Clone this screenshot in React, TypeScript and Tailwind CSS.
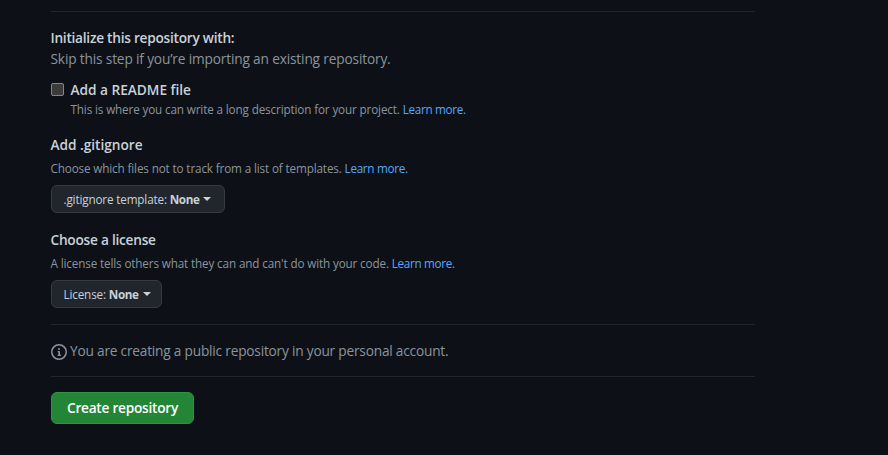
import type { ReactNode } from 'react'

function Divider() {
  return <div className="h-px w-[704px] bg-[#21262d]" />
}

function Heading({ children, className = '' }: { children: ReactNode; className?: string }) {
  return <h2 className={`-ml-[0.5px] h-[21px] text-[13.7px] leading-[19px] font-semibold text-[#c9d1d9] ${className}`}>{children}</h2>
}

function Note({ children, link, className = '' }: { children: ReactNode; link: string; className?: string }) {
  return (
    <p className={`-ml-[0.5px] h-[18px] text-[11.7px] leading-4 tracking-[-0.135px] text-[#8b949e] ${className}`}>
      {children} <a className="tracking-[-0.3px] text-[#58a6ff]">{link}</a>
    </p>
  )
}

function Dropdown({ label, value, className = '' }: { label: string; value: string; className?: string }) {
  return (
    <button className={`flex h-7 items-center rounded-md border border-[#363b42] bg-[#21262d] pl-[11.5px] text-[11.7px] leading-4 font-medium text-[#c9d1d9] ${className}`}>
      <span className="tracking-[-0.15px]">{label} <span className="font-bold tracking-[-0.4px]">{value}</span></span>
      <span className="ml-1 border-x-4 border-t-4 border-x-transparent border-t-[#c9d1d9]" />
    </button>
  )
}

export default function App() {
  return (
    <main className="h-[455px] w-[888px] overflow-hidden bg-[#0d1117] pt-[11px] pl-[51px] font-['Open_Sans',sans-serif] whitespace-nowrap">
      <Divider />
      <Heading className="mt-4 tracking-[-0.26px]">Initialize this repository with:</Heading>
      <p className="-ml-[0.5px] h-[21px] text-[13.7px] leading-[19px] tracking-[-0.16px] text-[#8b949e]">Skip this step if you’re importing an existing repository.</p>
      <div className="mt-[10px] flex">
        <span className="mt-[3px] mr-[7px] size-[13px] rounded-[2px] border border-[#858585] bg-[#3b3b3b]" />
        <div>
          <Heading className="tracking-[-0.03px]">Add a README file</Heading>
          <Note link="Learn more.">This is where you can write a long description for your project.</Note>
        </div>
      </div>
      <Heading className="mt-4 tracking-[-0.03px]">Add .gitignore</Heading>
      <Note className="mt-1" link="Learn more.">Choose which files not to track from a list of templates.</Note>
      <Dropdown className="mt-[7px] w-[174px]" label=".gitignore template:" value="None" />
      <Heading className="mt-[17px] tracking-[-0.25px]">Choose a license</Heading>
      <Note className="mt-1" link="Learn more.">A license tells others what they can and can't do with your code.</Note>
      <Dropdown className="mt-[7px] w-[111px]" label="License:" value="None" />
      <div className="mt-4"><Divider /></div>
      <div className="mt-4 flex h-[21px] items-center text-[13.7px] leading-[19px] tracking-[-0.21px] text-[#8b949e]">
        <svg className="mr-[3px] size-4" viewBox="0 0 16 16" fill="currentColor">
          <path fillRule="evenodd" d="M8 1.5a6.5 6.5 0 100 13 6.5 6.5 0 000-13zM0 8a8 8 0 1116 0A8 8 0 010 8zm6.5-.25A.75.75 0 017.25 7h1a.75.75 0 01.75.75v2.75h.25a.75.75 0 010 1.5h-2a.75.75 0 010-1.5h.25v-2h-.25a.75.75 0 01-.75-.75zM8 6a1 1 0 100-2 1 1 0 000 2z" />
        </svg>
        <span className="pb-0.5">You are creating a public repository in your personal account.</span>
      </div>
      <div className="mt-[14px]"><Divider /></div>
      <button className="mt-[15px] flex h-8 w-[143px] items-center justify-center rounded-md border border-[#2f9443] bg-[#238636] text-[13.7px] leading-5 font-semibold tracking-[-0.26px] text-white">
        <span>Create repository</span>
      </button>
    </main>
  )
}
